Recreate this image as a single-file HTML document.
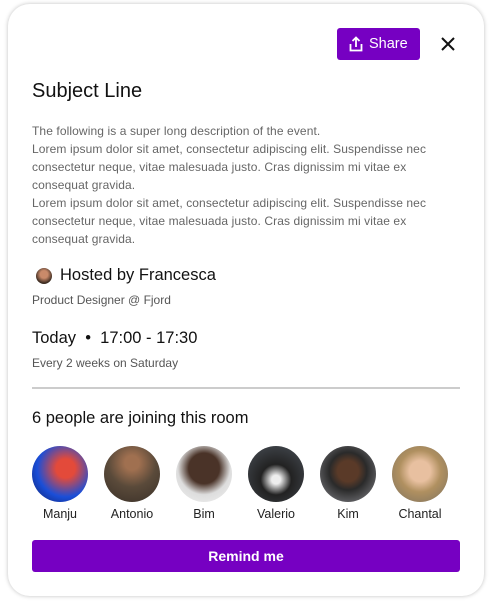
<!DOCTYPE html><html><head><style>
body{margin:0;width:492px;height:604px;background:#fff;font-family:"Liberation Sans",sans-serif;position:relative;overflow:hidden}
.card{position:absolute;left:8px;top:4px;width:476px;height:592px;border-radius:22px;background:#fff;box-shadow:0 0 4px rgba(0,0,0,.25)}
.a{position:absolute}
.share{left:337px;top:28px;width:83px;height:32px;background:#7600c2;border-radius:3px;color:#fff;font-size:14.5px;line-height:33px}
.desc{left:32px;top:122px;font-size:12px;line-height:18px;color:#666;width:418px;letter-spacing:.1px}
.av{width:56px;height:56px;border-radius:50%;top:446px}
.nm{top:507px;width:72px;text-align:center;font-size:12.5px;color:#222}
</style></head><body>
<div class="card"></div>
<div class="a share"><svg class="a" style="left:12px;top:8px" width="14" height="16" viewBox="0 0 14 16" fill="none" stroke="#fff" stroke-width="1.8"><path d="M7 11V1.5M3.5 5L7 1.5L10.5 5M1.5 8v6.5h11V8"/></svg><span class="a" style="left:32px">Share</span></div>
<svg class="a" style="left:440px;top:36px" width="16" height="16" viewBox="0 0 16 16" stroke="#111" stroke-width="2"><path d="M2 2L14 14M14 2L2 14"/></svg>
<div class="a" style="left:32px;top:80px;font-size:20px;color:#111">Subject Line</div>
<div class="a desc">The following is a super long description of the event.<br>Lorem ipsum dolor sit amet, consectetur adipiscing elit. Suspendisse nec consectetur neque, vitae malesuada justo. Cras dignissim mi vitae ex consequat gravida.<br>Lorem ipsum dolor sit amet, consectetur adipiscing elit. Suspendisse nec consectetur neque, vitae malesuada justo. Cras dignissim mi vitae ex consequat gravida.</div>
<div class="a" style="left:36px;top:268px;width:16px;height:16px;border-radius:50%;background:radial-gradient(circle at 50% 40%,#c98a6a 30%,#3a2a20 70%)"></div>
<div class="a" style="left:60px;top:266px;font-size:16.5px;color:#111">Hosted by Francesca</div>
<div class="a" style="left:32px;top:293px;font-size:12px;color:#555">Product Designer @ Fjord</div>
<div class="a" style="left:32px;top:329px;font-size:16.5px;color:#111">Today &nbsp;•&nbsp; 17:00 - 17:30</div>
<div class="a" style="left:32px;top:356px;font-size:12px;color:#555">Every 2 weeks on Saturday</div>
<div class="a" style="left:32px;top:387px;width:428px;height:2px;background:#ccc"></div>
<div class="a" style="left:32px;top:409px;font-size:16.5px;color:#111">6 people are joining this room</div>
<div class="a av" style="left:32px;background:radial-gradient(circle at 60% 40%,#e34a3a 20%,#1a4ed8 60%,#0d1a60)"></div>
<div class="a av" style="left:104px;background:radial-gradient(circle at 50% 30%,#a07050 15%,#5a4a3a 50%,#3a3028)"></div>
<div class="a av" style="left:176px;background:radial-gradient(circle at 50% 40%,#4a3328 35%,#ddd 60%,#f2f2f2)"></div>
<div class="a av" style="left:248px;background:radial-gradient(circle at 50% 60%,#eee 10%,#222 35%,#4a5058)"></div>
<div class="a av" style="left:320px;background:radial-gradient(circle at 50% 45%,#5a3a28 25%,#2a2a2a 45%,#8a8a90)"></div>
<div class="a av" style="left:392px;background:radial-gradient(circle at 50% 45%,#e8c0a0 25%,#b09060 50%,#7a7060)"></div>
<div class="a nm" style="left:24px">Manju</div><div class="a nm" style="left:96px">Antonio</div><div class="a nm" style="left:168px">Bim</div><div class="a nm" style="left:240px">Valerio</div><div class="a nm" style="left:312px">Kim</div><div class="a nm" style="left:384px">Chantal</div>
<div class="a" style="left:32px;top:540px;width:428px;height:32px;background:#7600c2;border-radius:3px;color:#fff;text-align:center;line-height:32px;font-size:14px;font-weight:bold">Remind me</div>
</body></html>
